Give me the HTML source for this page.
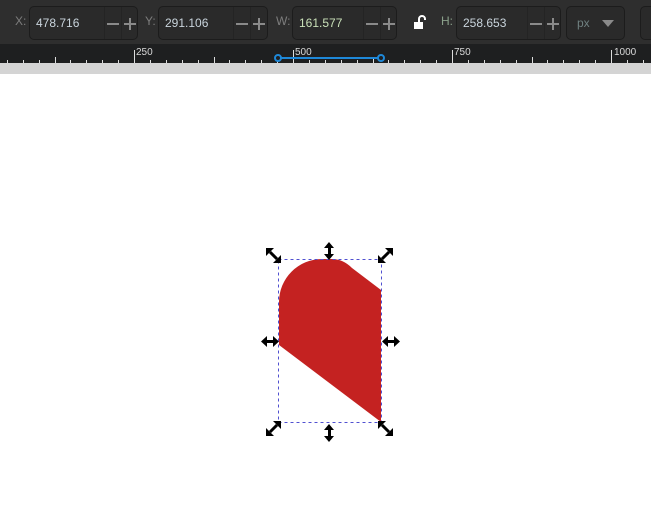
<!DOCTYPE html>
<html><head><style>
*{margin:0;padding:0;box-sizing:border-box}
body{width:651px;height:509px;background:#fff;position:relative;overflow:hidden;font-family:"Liberation Sans",sans-serif}
#tb{position:absolute;left:0;top:0;width:651px;height:44px;background:#2e2e2e}
.f{position:absolute;top:6px;height:34px;background:#2a2a2a;border:1px solid #1c1c1c;border-radius:5px}
.f .v{position:absolute;left:6px;top:9px;font-size:12px;color:#c9d4dc}
.f .s{position:absolute;top:0;bottom:0;width:1px;background:#242424}
.l{position:absolute;top:14px;font-size:12px;color:#7d7d7d}
#ru{position:absolute;left:0;top:44px;width:651px;height:19px;background:#1e1f20}
#gs{position:absolute;left:0;top:63px;width:651px;height:11px;background:#d4d4d4}
.n{position:absolute;top:3px;font-size:10px;color:#d8d8d8}
</style></head><body>
<div id="tb">
 <div class="l" style="left:15px">X:</div>
 <div class="f" style="left:29px;width:109px"><span class="v">478.716</span><div class="s" style="left:74px"></div><div class="s" style="left:91px"></div><svg style="position:absolute;left:76px;top:10px" width="32" height="14"><path d="M1 7h12M18 7h12M24 1v12" stroke="#8a8a8a" stroke-width="2"/></svg></div>
 <div class="l" style="left:145px">Y:</div>
 <div class="f" style="left:158px;width:110px"><span class="v">291.106</span><div class="s" style="left:74px"></div><div class="s" style="left:91px"></div><svg style="position:absolute;left:76px;top:10px" width="32" height="14"><path d="M1 7h12M18 7h12M24 1v12" stroke="#8a8a8a" stroke-width="2"/></svg></div>
 <div class="l" style="left:276px">W:</div>
 <div class="f" style="left:292px;width:105px"><span class="v" style="color:#c9e0b8">161.577</span><div class="s" style="left:70px"></div><div class="s" style="left:87px"></div><svg style="position:absolute;left:72px;top:10px" width="32" height="14"><path d="M1 7h12M18 7h12M24 1v12" stroke="#8a8a8a" stroke-width="2"/></svg></div>
 <svg style="position:absolute;left:413px;top:15px" width="14" height="15"><rect x="1" y="7" width="9" height="7" fill="#fff"/><path d="M3 7V4a3 3 0 0 1 6 0v1" stroke="#fff" stroke-width="2" fill="none" transform="translate(3,0)"/></svg>
 <div class="l" style="left:441px;color:#8aa08a">H:</div>
 <div class="f" style="left:456px;width:105px"><span class="v">258.653</span><div class="s" style="left:70px"></div><div class="s" style="left:87px"></div><svg style="position:absolute;left:72px;top:10px" width="32" height="14"><path d="M1 7h12M18 7h12M24 1v12" stroke="#8a8a8a" stroke-width="2"/></svg></div>
 <div class="f" style="left:566px;width:59px"><span class="v" style="left:10px;color:#6f8080">px</span><svg style="position:absolute;left:35px;top:13px" width="12" height="7"><path d="M0 0h12L6 7z" fill="#8a8a8a"/></svg></div>
 <div class="f" style="left:640px;width:30px"></div>
</div>
<div id="ru">
<svg width="651" height="19" style="position:absolute;left:0;top:0">
<g stroke="#ddd" stroke-width="1" id="tk"></g>
</svg>
<div class="n" style="left:136px">250</div>
<div class="n" style="left:295px">500</div>
<div class="n" style="left:454px">750</div>
<div class="n" style="left:614px">1000</div>
<svg width="651" height="19" style="position:absolute;left:0;top:0"><path d="M278 14H381" stroke="#1e88d8" stroke-width="2"/><circle cx="278" cy="14" r="3" fill="#1e1f20" stroke="#1e88d8" stroke-width="2"/><circle cx="381" cy="14" r="3" fill="#1e1f20" stroke="#1e88d8" stroke-width="2"/></svg>
</div>
<div id="gs"></div>
<svg width="651" height="509" style="position:absolute;left:0;top:0">
<path d="M279 345V302A43 43 0 0 1 322 259H332Q343 259 352 268L381 290V422Z" fill="#c42221"/>
<rect x="278.5" y="259.5" width="103" height="163" fill="none" stroke="#5050d0" stroke-dasharray="3,3"/>
<g fill="#000">
<g id="va"><rect x="328" y="247" width="3" height="8"/><path d="M324 248l5-6 5 6zM324 254l5 6 5-6z"/></g>
<use href="#va" y="182"/>
<g id="ha"><rect x="266" y="340" width="8" height="3"/><path d="M267 336l-6 5.5 6 5.5zM273 336l6 5.5-6 5.5z"/></g>
<use href="#ha" x="121"/>
<g id="da"><path d="M270 252l7 7" stroke="#000" stroke-width="3"/><path d="M266 248h8l-8 8z"/><path d="M281 263h-8l8-8z"/></g>
<use href="#da" transform="translate(659,0) scale(-1,1)"/>
<use href="#da" transform="translate(0,684) scale(1,-1)"/>
<use href="#da" transform="translate(659,684) scale(-1,-1)"/>
</g>
</svg>
<script>
var g=document.getElementById('tk'),s='';
for(var i=-10;i<40;i++){var x=Math.round(134+i*15.9)+.5;if(x<0||x>651)continue;var k=((i%10)+10)%10;var h=(k==0)?13:(k==5?6:3);s+='<path d="M'+x+' '+(19-h)+'V19"/>';}
g.innerHTML=s;
</script>
</body></html>
